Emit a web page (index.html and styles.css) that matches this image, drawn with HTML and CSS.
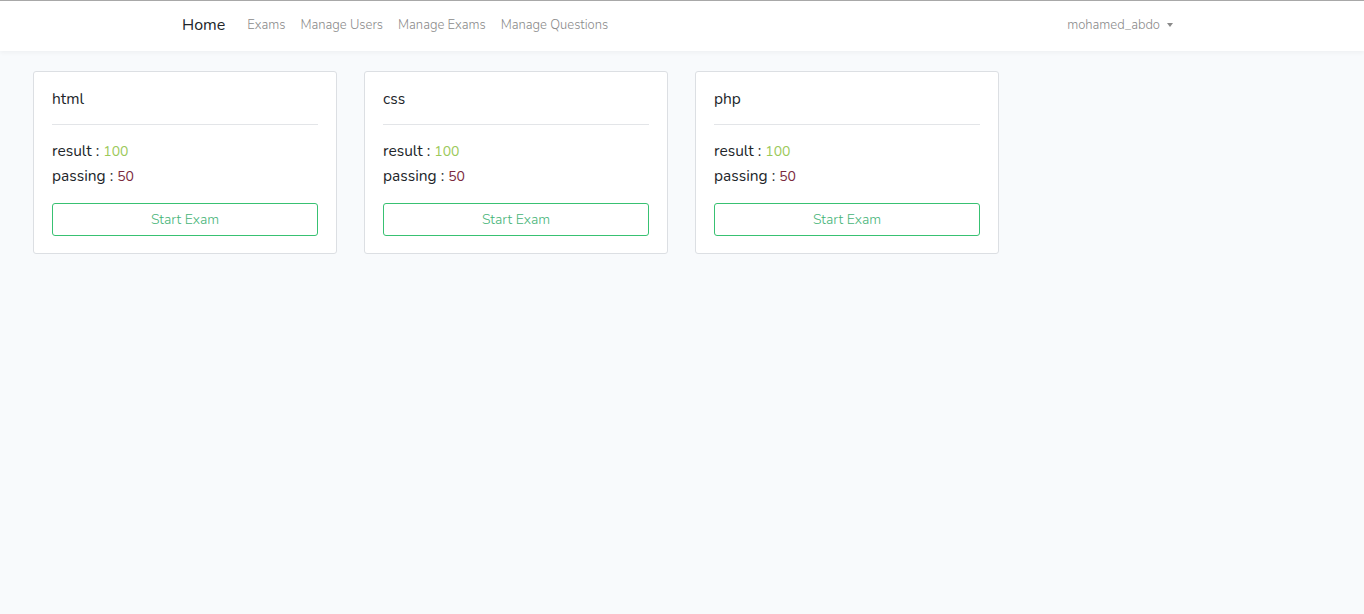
FILE: index.html
```html
<!DOCTYPE html>
<html>
<head>
<meta charset="utf-8">
<link rel="stylesheet" href="styles.css">
</head>
<body>
<nav class="navbar">
  <div class="nav-inner">
    <a class="brand">Home</a>
    <ul class="nav-links">
      <li>Exams</li>
      <li>Manage Users</li>
      <li>Manage Exams</li>
      <li>Manage Questions</li>
    </ul>
    <div class="user">mohamed_abdo<span class="caret"></span></div>
  </div>
</nav>
<main class="cards">
  <div class="card">
    <div class="card-title">html</div>
    <hr class="sep">
    <div class="line">result : <span class="res">100</span></div>
    <div class="line">passing : <span class="pass">50</span></div>
    <button class="btn">Start Exam</button>
  </div>
  <div class="card">
    <div class="card-title">css</div>
    <hr class="sep">
    <div class="line">result : <span class="res">100</span></div>
    <div class="line">passing : <span class="pass">50</span></div>
    <button class="btn">Start Exam</button>
  </div>
  <div class="card">
    <div class="card-title">php</div>
    <hr class="sep">
    <div class="line">result : <span class="res">100</span></div>
    <div class="line">passing : <span class="pass">50</span></div>
    <button class="btn">Start Exam</button>
  </div>
</main>
</body>
</html>
```
FILE: styles.css
```css
* { box-sizing: border-box; }
html, body { margin: 0; padding: 0; }
body {
  background: #f8fafc;
  font-family: "Nunito", "Lato", "Noto Sans", sans-serif;
  color: #212529;
  font-size: 14.4px;
  min-height: 614px;
  border-top: 1px solid #a8a8a8;
}
.navbar {
  background: #fff;
  height: 50px;
  box-shadow: 0 2px 4px rgba(0,0,0,0.04);
}
.nav-inner {
  display: flex;
  align-items: center;
  height: 48px;
  padding: 0 191px 0 182px;
}
.brand {
  font-size: 16px;
  color: #212529;
  margin-right: 22px;
}
.nav-links {
  display: flex;
  list-style: none;
  margin: 0;
  padding: 0;
  flex: 1;
  gap: 15px;
}
.nav-links li {
  color: #8a8a8a;
  font-size: 13px;
  font-weight: 300;
}
.user {
  color: #8a8a8a;
  font-size: 13px;
  font-weight: 300;
  display: flex;
  align-items: center;
}
.caret {
  display: inline-block;
  margin-left: 7px;
  border-top: 4px solid #8a8a8a;
  border-left: 3.5px solid transparent;
  border-right: 3.5px solid transparent;
}
.cards {
  display: flex;
  gap: 27px;
  padding: 20px 0 0 33px;
  align-items: flex-start;
}
.card {
  width: 304px;
  background: #fff;
  border: 1px solid #dcdfe3;
  border-radius: 3px;
  padding: 16px 18px 17px 18px;
  display: flex;
  flex-direction: column;
}
.card-title {
  font-size: 15.5px;
  line-height: 22px;
}
.sep {
  border: 0;
  border-top: 1px solid #e3e5e8;
  margin: 14px 0 13px 0;
  width: 100%;
}
.line {
  font-size: 15.5px;
  line-height: 25px;
  height: 25px;
}
.res { color: #9bc95a; font-size: 14px; }
.pass { color: #7b2a3e; font-size: 14px; }
.btn {
  margin-top: 15px;
  height: 33px;
  flex: none;
  width: 100%;
  background: #fff;
  border: 1px solid #38c172;
  border-radius: 3px;
  color: #45b477;
  font-family: inherit;
  font-size: 14px;
  font-weight: 300;
}
```
